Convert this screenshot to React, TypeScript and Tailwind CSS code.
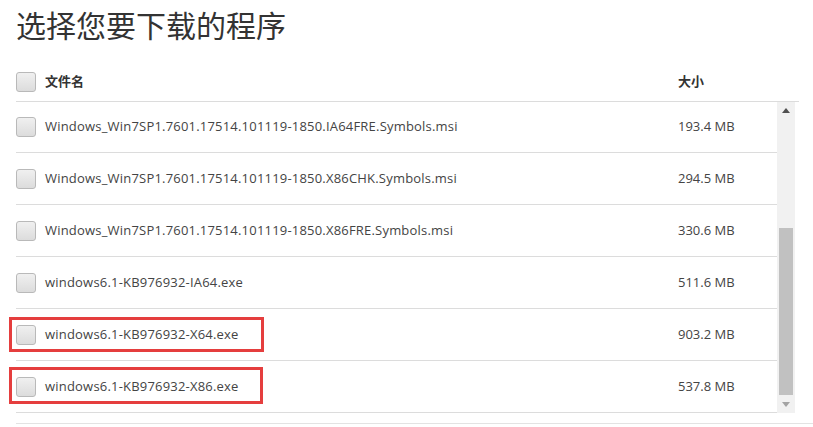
import React from 'react';

interface FileItem {
  name: string;
  size: string;
  marked?: boolean;
}

const files: FileItem[] = [
  { name: 'Windows_Win7SP1.7601.17514.101119-1850.IA64FRE.Symbols.msi', size: '193.4 MB' },
  { name: 'Windows_Win7SP1.7601.17514.101119-1850.X86CHK.Symbols.msi', size: '294.5 MB' },
  { name: 'Windows_Win7SP1.7601.17514.101119-1850.X86FRE.Symbols.msi', size: '330.6 MB' },
  { name: 'windows6.1-KB976932-IA64.exe', size: '511.6 MB' },
  { name: 'windows6.1-KB976932-X64.exe', size: '903.2 MB', marked: true },
  { name: 'windows6.1-KB976932-X86.exe', size: '537.8 MB', marked: true },
];

const font = { fontFamily: '"Open Sans", "Noto Sans CJK SC", sans-serif' };

const Checkbox: React.FC = () => (
  <span className="block w-[20px] h-[20px] shrink-0 rounded-[3px] border border-[#b9b9b9] bg-gradient-to-b from-[#f0f0f0] to-[#dcdcdc]" />
);

const App: React.FC = () => {
  return (
    <div className="w-[813px] h-[427px] bg-white pl-[16px] overflow-hidden text-[#333]" style={font}>
      <h1 className="pt-[8px] h-[44px] text-[30px] leading-[36px] font-normal text-[#333] mr-[14px]">
        选择您要下载的程序
      </h1>

      {/* header */}
      <div className="mt-[19px] h-[39px] mr-[14px] flex items-center border-b border-[#dcdcdc] text-[13px] font-bold text-[#333]">
        <Checkbox />
        <span className="ml-[9px] flex-1">文件名</span>
        <span className="w-[121px]">大小</span>
      </div>

      {/* list + scrollbar */}
      <div className="flex mr-[18px] h-[311px]">
        <div className="flex-1 flex flex-col">
          {files.map((f, idx) => (
            <div
              key={idx}
              className={`relative flex items-center border-b border-[#dcdcdc] text-[13px] text-[#444] shrink-0 ${idx === 0 ? 'h-[51px]' : 'h-[52px]'}`}
            >
              <Checkbox />
              <span className="ml-[9px] flex-1 whitespace-nowrap tracking-[0.2px]">{f.name}</span>
              <span className="w-[99px]">{f.size}</span>
              {f.marked && (
                <span
                  className={`absolute left-[-7px] border-[3px] border-[#e53e3e] pointer-events-none ${idx === 4 ? 'top-[8px] h-[35px] w-[255px]' : 'top-[6px] h-[37px] w-[254px]'}`}
                />
              )}
            </div>
          ))}
        </div>

        {/* scrollbar */}
        <div className="w-[18px] bg-[#f1f1f1] flex flex-col items-center">
          <div className="h-[17px] w-full flex items-center justify-center">
            <svg width="8" height="5" viewBox="0 0 8 5">
              <path d="M0 5 L4 0 L8 5 Z" fill="#505050" />
            </svg>
          </div>
          <div className="flex-1 w-full flex flex-col px-[2px]">
            <div className="h-[109px]" />
            <div className="h-[167px] bg-[#c1c1c1]" />
          </div>
          <div className="h-[18px] w-full flex items-center justify-center">
            <svg width="8" height="5" viewBox="0 0 8 5">
              <path d="M0 0 L8 0 L4 5 Z" fill="#a3a3a3" />
            </svg>
          </div>
        </div>
      </div>

      <div className="mt-[10px] border-t border-[#e3e3e3]" />
    </div>
  );
};

export default App;
